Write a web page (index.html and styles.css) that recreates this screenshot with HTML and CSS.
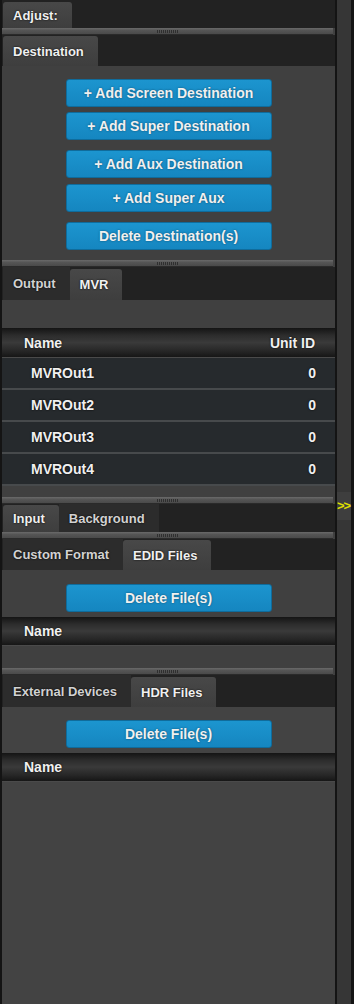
FILE: index.html
```html
<!DOCTYPE html>
<html lang="en">

<head>
    <meta charset="UTF-8">
    <meta name="viewport" content="width=device-width, initial-scale=1.0">
    <title>Adjust</title>
    <link rel="stylesheet" href="styles.css">
</head>

<body>
    <div class="main">
        <!-- Adjust -->
        <div class="tab-bar bar-adjust">
            <div class="tab active">Adjust:</div>
        </div>
        <div class="splitter"><span class="grip"></span></div>

        <!-- Destination -->
        <div class="tab-bar bar-dest">
            <div class="tab active">Destination</div>
        </div>
        <div class="panel panel-dest">
            <button class="button b1">+ Add Screen Destination</button>
            <button class="button b2">+ Add Super Destination</button>
            <button class="button b3">+ Add Aux Destination</button>
            <button class="button b4">+ Add Super Aux</button>
            <button class="button b5">Delete Destination(s)</button>
        </div>
        <div class="splitter"><span class="grip"></span></div>

        <!-- Output / MVR -->
        <div class="tab-bar bar-output">
            <div class="tab">Output</div>
            <div class="tab active">MVR</div>
        </div>
        <div class="panel panel-mvr">
            <div class="table-head">
                <span>Name</span>
                <span>Unit ID</span>
            </div>
            <div class="row"><span>MVROut1</span><span>0</span></div>
            <div class="row"><span>MVROut2</span><span>0</span></div>
            <div class="row"><span>MVROut3</span><span>0</span></div>
            <div class="row"><span>MVROut4</span><span>0</span></div>
        </div>
        <div class="splitter"><span class="grip"></span></div>

        <!-- Input / Background -->
        <div class="tab-bar bar-input">
            <div class="tab active">Input</div>
            <div class="tab">Background</div>
        </div>
        <div class="splitter"><span class="grip"></span></div>

        <!-- Custom Format / EDID -->
        <div class="tab-bar bar-edid">
            <div class="tab">Custom Format</div>
            <div class="tab active">EDID Files</div>
        </div>
        <div class="panel panel-edid">
            <button class="button">Delete File(s)</button>
            <div class="table-head">
                <span>Name</span>
            </div>
        </div>
        <div class="splitter"><span class="grip"></span></div>

        <!-- External Devices / HDR -->
        <div class="tab-bar bar-hdr">
            <div class="tab">External Devices</div>
            <div class="tab active">HDR Files</div>
        </div>
        <div class="panel panel-hdr">
            <button class="button">Delete File(s)</button>
            <div class="table-head">
                <span>Name</span>
            </div>
        </div>
    </div>

    <div class="side">
        <div class="side-tab">&gt;&gt;</div>
    </div>
</body>

</html>
```

FILE: styles.css
```css
:root {
    --color-frame: #141414;
    --color-bar: #222222;
    --color-tab: #2c2c2c;
    --color-panel: #404040;
    --color-button: #1a8fc9;
    --color-text: #f0f0f0;
}

* {
    margin: 0;
    padding: 0;
    box-sizing: border-box;
    font-family: 'Liberation Sans', Arial, sans-serif;
}

body {
    width: 354px;
    height: 1004px;
    background-color: var(--color-frame);
    display: flex;
    padding-left: 2px;
    overflow: hidden;
}

.main {
    width: 333px;
    height: 1004px;
    display: flex;
    flex-direction: column;
    background-color: var(--color-panel);
}

/* tabs */
.tab-bar {
    display: flex;
    align-items: flex-end;
    background-color: var(--color-bar);
    padding-left: 1px;
}

.bar-adjust { height: 28px; }
.bar-dest { height: 31px; }
.bar-output { height: 33px; }
.bar-input { height: 28px; }
.bar-edid { height: 31px; }
.bar-hdr { height: 32px; }

.tab {
    height: 100%;
    display: flex;
    align-items: center;
    padding: 0 14px 0 10px;
    font-size: 13px;
    font-weight: bold;
    color: #d2d2d2;
    background-color: var(--color-tab);
    text-shadow: 0 0 2px #000;
}

.tab.active {
    color: var(--color-text);
    background: linear-gradient(#484848, #3e3e3e);
    border-radius: 3px 3px 0 0;
}

.bar-adjust .tab { height: 26px; }
.bar-dest .tab { height: 30px; }
.bar-output .tab.active { height: 31px; }
.bar-input .tab.active { height: 27px; }
.bar-edid .tab.active { height: 30px; }
.bar-hdr .tab.active { height: 30px; }

/* splitter between sections */
.splitter {
    height: 7px;
    width: 331px;
    flex-shrink: 0;
    background: linear-gradient(#6a6a6a, #555555 40%, #4a4a4a);
    border-bottom: 1px solid #2a2a2a;
    display: flex;
    justify-content: center;
    padding-top: 2px;
}

.grip {
    width: 22px;
    height: 3px;
    background: repeating-linear-gradient(90deg, #2f2f2f 0 1px, transparent 1px 2px);
}

/* panels */
.panel {
    display: flex;
    flex-direction: column;
    align-items: center;
    background-color: var(--color-panel);
}

.panel-dest {
    height: 194px;
    padding-top: 13px;
}

.panel-mvr {
    height: 197px;
    padding-top: 28px;
}

.panel-edid {
    height: 98px;
    padding-top: 14px;
}

.panel-hdr {
    flex: 1;
    padding-top: 13px;
    background-color: #434343;
}

.button {
    width: 206px;
    height: 28px;
    flex-shrink: 0;
    background: linear-gradient(#1c95cf, #1586c0);
    border: 1px solid #0f6c9c;
    border-radius: 3px;
    color: var(--color-text);
    font-size: 14px;
    font-weight: bold;
    text-shadow: 0 0 2px #0b4a6a;
}

.b2 { margin-top: 5px; }
.b3 { margin-top: 10px; }
.b4 { margin-top: 6px; }
.b5 { margin-top: 10px; }

/* tables */
.table-head {
    width: 100%;
    height: 30px;
    flex-shrink: 0;
    display: flex;
    align-items: center;
    justify-content: space-between;
    padding: 0 20px 0 22px;
    background: linear-gradient(#141414, #2c2c2c 25%, #3a3a3a 50%, #262626 80%, #161616);
    border-bottom: 1px solid #4a4a4a;
    font-size: 14px;
    font-weight: bold;
    color: var(--color-text);
    text-shadow: 0 0 2px #000;
}

.panel-edid .table-head,
.panel-hdr .table-head {
    margin-top: 5px;
    height: 29px;
}

.row {
    width: 100%;
    height: 32px;
    flex-shrink: 0;
    display: flex;
    align-items: center;
    justify-content: space-between;
    padding: 0 19px 0 29px;
    background-color: #262a2d;
    border-bottom: 2px solid #474a4c;
    font-size: 14px;
    font-weight: bold;
    color: var(--color-text);
    text-shadow: 0 0 2px #000;
}

/* right collapse strip */
.side {
    width: 14px;
    height: 1004px;
    margin-left: 2px;
    background-color: #363636;
    padding-top: 492px;
}

.side-tab {
    height: 28px;
    background-color: #3e3e3e;
    color: #e0e000;
    font-size: 13px;
    font-weight: bold;
    letter-spacing: -1px;
    padding: 8px 0 0 0;
    line-height: 11px;
}
```
